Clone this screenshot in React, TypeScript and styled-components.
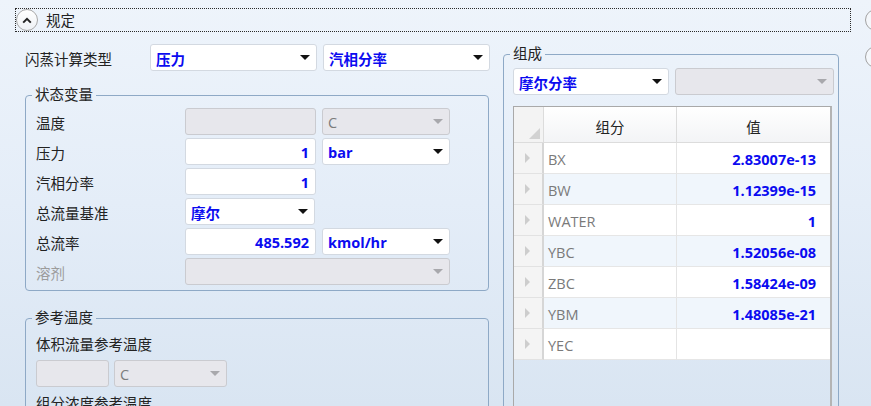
import { FunctionComponent, Fragment } from "react";
import styled, { createGlobalStyle } from "styled-components";

const GlobalStyle = createGlobalStyle`
  html, body {
    margin: 0;
    padding: 0;
  }
  body {
    width: 871px;
    height: 406px;
    overflow: hidden;
    background: linear-gradient(180deg, #eef4fb 0%, #e4edf8 50%, #d9e5f2 100%);
    font-family: "Open Sans", "Noto Sans CJK SC", sans-serif;
    font-size: 14.5px;
    color: #1e1e1e;
  }
`;

const Page = styled.div`
  display: flex;
  height: 406px;
  overflow: hidden;
`;
const Main = styled.div`
  width: 855px;
  flex-shrink: 0;
  display: flex;
  flex-direction: column;
`;
const Side = styled.div`
  flex: 1;
  display: flex;
  flex-direction: column;
  gap: 15px;
  padding: 9px 0 0 10px;
  overflow: hidden;
`;
const SideButton = styled.div`
  width: 22px;
  height: 22px;
  flex-shrink: 0;
  box-sizing: border-box;
  border-radius: 50%;
  border: 1px solid #a2a2a2;
  background: #f4f7fb;
`;
const Header = styled.div`
  margin: 8px 0 0 15px;
  width: 836px;
  height: 25px;
  box-sizing: border-box;
  border: 1px dotted #2a2a2a;
  display: flex;
  align-items: center;
  gap: 8px;
`;
const CollapseButton = styled.div`
  width: 22px;
  height: 22px;
  box-sizing: border-box;
  border-radius: 50%;
  border: 1px solid #a8a8a8;
  background: linear-gradient(180deg, #ffffff 0%, #eef1f5 100%);
  display: flex;
  align-items: center;
  justify-content: center;
`;
const HeaderTitle = styled.span`
  line-height: 20px;
  padding-top: 1px;
  color: #222;
`;
const Body = styled.div`
  display: flex;
  gap: 14px;
  padding-left: 25px;
  margin-top: 12px;
`;
const LeftColumn = styled.div`
  width: 464px;
  display: flex;
  flex-direction: column;
`;
const FlashRow = styled.div`
  display: flex;
  align-items: center;
  height: 27px;
  gap: 6px;
`;
const FlashLabel = styled.span`
  width: 119px;
  flex-shrink: 0;
  padding-top: 2px;
  color: #222;
`;
const Group = styled.fieldset<{ $width: number; $height?: number; $top: number }>`
  margin: ${(p) => p.$top}px 0 0 0;
  padding: 0;
  min-width: 0;
  width: ${(p) => p.$width}px;
  ${(p) => (p.$height ? `height: ${p.$height}px;` : "")}
  box-sizing: border-box;
  border: 1px solid #8ea9c6;
  border-radius: 4px;
`;
const Legend = styled.legend`
  margin-left: 6px;
  padding: 0 3px;
  line-height: 20px;
  color: #222;
`;
const GroupContent = styled.div<{ $pad: string }>`
  padding: ${(p) => p.$pad};
  display: flex;
  flex-direction: column;
`;
const FieldList = styled.div`
  display: flex;
  flex-direction: column;
  gap: 3px;
`;
const FieldRow = styled.div`
  display: flex;
  align-items: center;
  height: 27px;
  gap: 6px;
`;
const FieldLabel = styled.span<{ $muted?: boolean }>`
  width: 143px;
  flex-shrink: 0;
  padding-top: 2px;
  color: ${(p) => (p.$muted ? "#9c9c9c" : "#222")};
`;
const Caption = styled.div<{ $top: number }>`
  margin-top: ${(p) => p.$top}px;
  line-height: 20px;
  color: #222;
`;
const Combo = styled.div<{ $width: number; $disabled?: boolean }>`
  width: ${(p) => p.$width}px;
  height: 27px;
  flex-shrink: 0;
  box-sizing: border-box;
  display: flex;
  align-items: center;
  justify-content: space-between;
  padding: 0 6px 0 5px;
  border: 1px solid ${(p) => (p.$disabled ? "#cacbd0" : "#d3d9e1")};
  border-radius: 3px;
  background: ${(p) => (p.$disabled ? "#e7e7ec" : "#ffffff")};
  color: ${(p) => (p.$disabled ? "#7c7c7c" : "#0b0bf0")};
  font-weight: ${(p) => (p.$disabled ? 400 : 700)};
`;
const ComboText = styled.span`
  padding-top: 2px;
`;
const Arrow = styled.span<{ $disabled?: boolean }>`
  width: 0;
  height: 0;
  border-left: 5px solid transparent;
  border-right: 5px solid transparent;
  border-top: 5px solid ${(p) => (p.$disabled ? "#a8a8ac" : "#111")};
`;
const NumberBox = styled.div<{ $width: number; $disabled?: boolean }>`
  width: ${(p) => p.$width}px;
  height: 27px;
  flex-shrink: 0;
  box-sizing: border-box;
  display: flex;
  align-items: center;
  justify-content: flex-end;
  padding: 2px 6px 0 0;
  border: 1px solid ${(p) => (p.$disabled ? "#cacbd0" : "#d3d9e1")};
  border-radius: 3px;
  background: ${(p) => (p.$disabled ? "#e7e7ec" : "#ffffff")};
  color: #0b0bf0;
  font-weight: 700;
`;
const InlineRow = styled.div<{ $top: number }>`
  display: flex;
  gap: 5px;
  margin-top: ${(p) => p.$top}px;
`;
const Table = styled.div`
  margin-top: 11px;
  width: 319px;
  height: 320px;
  box-sizing: border-box;
  border: 1px solid #a9a9a9;
  border-right: 2px solid #b4b4b4;
  display: grid;
  grid-template-columns: 30px 133px 1fr;
  grid-auto-rows: 31px;
  grid-template-rows: 36px;
  align-content: start;
`;
const Corner = styled.div`
  position: relative;
  background: #f3f3f3;
  border-right: 1px solid #dcdcdc;
  border-bottom: 1px solid #dcdcdc;
  &::after {
    content: "";
    position: absolute;
    right: 3px;
    bottom: 3px;
    width: 0;
    height: 0;
    border-left: 11px solid transparent;
    border-bottom: 11px solid #d2d2d2;
  }
`;
const HeadCell = styled.div<{ $last?: boolean }>`
  display: flex;
  align-items: center;
  justify-content: center;
  padding-top: 3px;
  background: linear-gradient(180deg, #ffffff 0%, #f3f4f6 100%);
  border-right: ${(p) => (p.$last ? "none" : "1px solid #dcdcdc")};
  border-bottom: 1px solid #dcdcdc;
  color: #222;
`;
const RowHead = styled.div`
  display: flex;
  align-items: center;
  padding-left: 11px;
  background: #f4f4f4;
  border-right: 2px solid #d6d6d6;
  border-bottom: 1px solid #e2e2e2;
  &::before {
    content: "";
    width: 0;
    height: 0;
    border-top: 5px solid transparent;
    border-bottom: 5px solid transparent;
    border-left: 5px solid #cdcdcd;
  }
`;
const NameCell = styled.div<{ $alt: boolean }>`
  display: flex;
  align-items: center;
  padding: 3px 0 0 4px;
  background: ${(p) => (p.$alt ? "#f0f6fc" : "#ffffff")};
  border-right: 1px solid #e4e4e4;
  border-bottom: 1px solid #e6e6e6;
  color: #7a7a7a;
`;
const ValueCell = styled.div<{ $alt: boolean }>`
  display: flex;
  align-items: center;
  justify-content: flex-end;
  padding: 3px 14px 0 0;
  background: ${(p) => (p.$alt ? "#f0f6fc" : "#ffffff")};
  border-bottom: 1px solid #e6e6e6;
  color: #0b0bf0;
  font-weight: 700;
`;

const components: [string, string][] = [
  ["BX", "2.83007e-13"],
  ["BW", "1.12399e-15"],
  ["WATER", "1"],
  ["YBC", "1.52056e-08"],
  ["ZBC", "1.58424e-09"],
  ["YBM", "1.48085e-21"],
  ["YEC", ""],
];

const Dropdown: FunctionComponent<{ width: number; value?: string; disabled?: boolean }> = ({
  width,
  value,
  disabled,
}) => (
  <Combo $width={width} $disabled={disabled}>
    <ComboText>{value}</ComboText>
    <Arrow $disabled={disabled} />
  </Combo>
);

const App: FunctionComponent = () => {
  return (
    <Page>
      <GlobalStyle />
      <Main>
        <Header>
          <CollapseButton>
            <svg width="10" height="7" viewBox="0 0 10 7">
              <path d="M1.2 5.6 L5 1.8 L8.8 5.6" fill="none" stroke="#222" strokeWidth="2" />
            </svg>
          </CollapseButton>
          <HeaderTitle>规定</HeaderTitle>
        </Header>
        <Body>
          <LeftColumn>
            <FlashRow>
              <FlashLabel>闪蒸计算类型</FlashLabel>
              <Dropdown width={167} value="压力" />
              <Dropdown width={167} value="汽相分率" />
            </FlashRow>
            <Group $width={464} $top={14}>
              <Legend>状态变量</Legend>
              <GroupContent $pad="3px 0 5px 10px">
                <FieldList>
                  <FieldRow>
                    <FieldLabel>温度</FieldLabel>
                    <NumberBox $width={131} $disabled />
                    <Dropdown width={128} value="C" disabled />
                  </FieldRow>
                  <FieldRow>
                    <FieldLabel>压力</FieldLabel>
                    <NumberBox $width={131}>1</NumberBox>
                    <Dropdown width={128} value="bar" />
                  </FieldRow>
                  <FieldRow>
                    <FieldLabel>汽相分率</FieldLabel>
                    <NumberBox $width={131}>1</NumberBox>
                  </FieldRow>
                  <FieldRow>
                    <FieldLabel>总流量基准</FieldLabel>
                    <Dropdown width={130} value="摩尔" />
                  </FieldRow>
                  <FieldRow>
                    <FieldLabel>总流率</FieldLabel>
                    <NumberBox $width={131}>485.592</NumberBox>
                    <Dropdown width={128} value="kmol/hr" />
                  </FieldRow>
                  <FieldRow>
                    <FieldLabel $muted>溶剂</FieldLabel>
                    <Dropdown width={265} disabled />
                  </FieldRow>
                </FieldList>
              </GroupContent>
            </Group>
            <Group $width={464} $top={17} $height={140}>
              <Legend>参考温度</Legend>
              <GroupContent $pad="0 0 0 10px">
                <Caption $top={7}>体积流量参考温度</Caption>
                <InlineRow $top={5}>
                  <NumberBox $width={73} $disabled />
                  <Dropdown width={113} value="C" disabled />
                </InlineRow>
                <Caption $top={7}>组分浓度参考温度</Caption>
              </GroupContent>
            </Group>
          </LeftColumn>
          <Group $width={336} $top={0} $height={420}>
            <Legend>组成</Legend>
            <GroupContent $pad="4px 5px 0 9px">
              <FieldRow>
                <Dropdown width={156} value="摩尔分率" />
                <Dropdown width={159} disabled />
              </FieldRow>
              <Table>
                <Corner />
                <HeadCell>组分</HeadCell>
                <HeadCell $last>值</HeadCell>
                {components.map(([name, value], i) => (
                  <Fragment key={name}>
                    <RowHead />
                    <NameCell $alt={i % 2 === 1}>{name}</NameCell>
                    <ValueCell $alt={i % 2 === 1}>{value}</ValueCell>
                  </Fragment>
                ))}
              </Table>
            </GroupContent>
          </Group>
        </Body>
      </Main>
      <Side>
        <SideButton />
        <SideButton />
      </Side>
    </Page>
  );
};

export default App;
